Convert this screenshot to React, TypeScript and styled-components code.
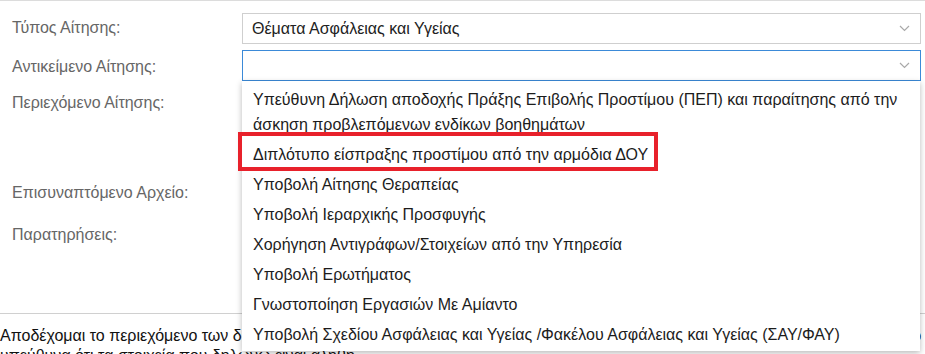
import React from "react";
import styled, { createGlobalStyle } from "styled-components";

const Global = createGlobalStyle`
  html, body { margin: 0; padding: 0; background: #fff; }
  body { font-family: "Liberation Sans", Arial, sans-serif; font-size: 16px; color: #222; overflow: hidden; }
  * { box-sizing: border-box; }
`;

const Page = styled.div`
  width: 925px;
  height: 354px;
  border-top: 1px solid #dcdcdc;
  position: relative;
  overflow: hidden;
`;

const Form = styled.div`
  display: grid;
  grid-template-columns: 230px 679px;
  row-gap: 6px;
  padding: 12px 0 0 12px;
`;

const Label = styled.label<{ $top?: number }>`
  color: #666;
  font-size: 16px;
  line-height: 18px;
  padding-top: ${(p) => p.$top ?? 6}px;
`;

const Control = styled.div<{ $h: number }>`
  position: relative;
  height: ${(p) => p.$h}px;
`;

const Select = styled.div<{ $focused?: boolean }>`
  height: 31px;
  border: 1px solid ${(p) => (p.$focused ? "#3b8ad8" : "#cfcfcf")};
  display: flex;
  align-items: center;
  justify-content: space-between;
  padding: 0 10px 0 9px;
  font-size: 16px;
  color: #222;
  background: #fff;
`;

const Chevron = () => (
  <svg width="11" height="7" viewBox="0 0 11 7">
    <path d="M1 1 L5.5 5.5 L10 1" fill="none" stroke="#a9a9a9" strokeWidth="1.2" />
  </svg>
);

const TextArea = styled.div<{ $h: number }>`
  width: 670px;
  height: ${(p) => p.$h}px;
  border: 1px solid #cfcfcf;
`;

const Divider = styled.div`
  margin-top: 33px;
  border-top: 1px solid #d0d0d0;
`;

const Accept = styled.p`
  margin: 0;
  padding-top: 12px;
  font-size: 16px;
  line-height: 20px;
  color: #111;
  width: 960px;
`;

const Dropdown = styled.ul`
  position: absolute;
  top: 31px;
  left: 0;
  width: 678px;
  margin: 0;
  padding: 3px 0 2px;
  list-style: none;
  background: #fff;
  box-shadow: 0 2px 6px rgba(0, 0, 0, 0.28);
  z-index: 10;
`;

const Item = styled.li`
  padding: 2.5px 14px 2.5px 11px;
  font-size: 16px;
  line-height: 25px;
  color: #1c1c1c;
`;

const Highlight = styled.span`
  position: relative;
  &::after {
    content: "";
    position: absolute;
    left: -15px;
    right: -10px;
    top: -14px;
    bottom: -8px;
    border: 4px solid #e8212b;
  }
`;

const items = [
  "Υπεύθυνη Δήλωση αποδοχής Πράξης Επιβολής Προστίμου (ΠΕΠ) και παραίτησης από την άσκηση προβλεπόμενων ενδίκων βοηθημάτων",
  "Διπλότυπο είσπραξης προστίμου από την αρμόδια ΔΟΥ",
  "Υποβολή Αίτησης Θεραπείας",
  "Υποβολή Ιεραρχικής Προσφυγής",
  "Χορήγηση Αντιγράφων/Στοιχείων από την Υπηρεσία",
  "Υποβολή Ερωτήματος",
  "Γνωστοποίηση Εργασιών Με Αμίαντο",
  "Υποβολή Σχεδίου Ασφάλειας και Υγείας /Φακέλου Ασφάλειας και Υγείας (ΣΑΥ/ΦΑΥ)",
];

export default function App() {
  return (
    <>
      <Global />
      <Page>
        <Form>
          <Label>Τύπος Αίτησης:</Label>
          <Control $h={31}>
            <Select>
              <span>Θέματα Ασφάλειας και Υγείας</span>
              <Chevron />
            </Select>
          </Control>

          <Label $top={8}>Αντικείμενο Αίτησης:</Label>
          <Control $h={31}>
            <Select $focused>
              <span />
              <Chevron />
            </Select>
            <Dropdown>
              {items.map((t, i) => (
                <Item key={i}>{i === 1 ? <Highlight>{t}</Highlight> : t}</Item>
              ))}
            </Dropdown>
          </Control>

          <Label $top={7}>Περιεχόμενο Αίτησης:</Label>
          <Control $h={82}>
            <TextArea $h={82} />
          </Control>

          <Label $top={9}>Επισυναπτόμενο Αρχείο:</Label>
          <Control $h={39}>
            <TextArea $h={30} />
          </Control>

          <Label $top={6}>Παρατηρήσεις:</Label>
          <Control $h={60}>
            <TextArea $h={60} />
          </Control>
        </Form>
        <Divider />
        <Accept>
          Αποδέχομαι το περιεχόμενο των δηλώσεων της παρούσας αίτησης και των όρων χρήσης της ηλεκτρονικής υπηρεσίας
          και δηλώνω υπεύθυνα ότι τα στοιχεία που δηλώνω είναι αληθή.
        </Accept>
      </Page>
    </>
  );
}
